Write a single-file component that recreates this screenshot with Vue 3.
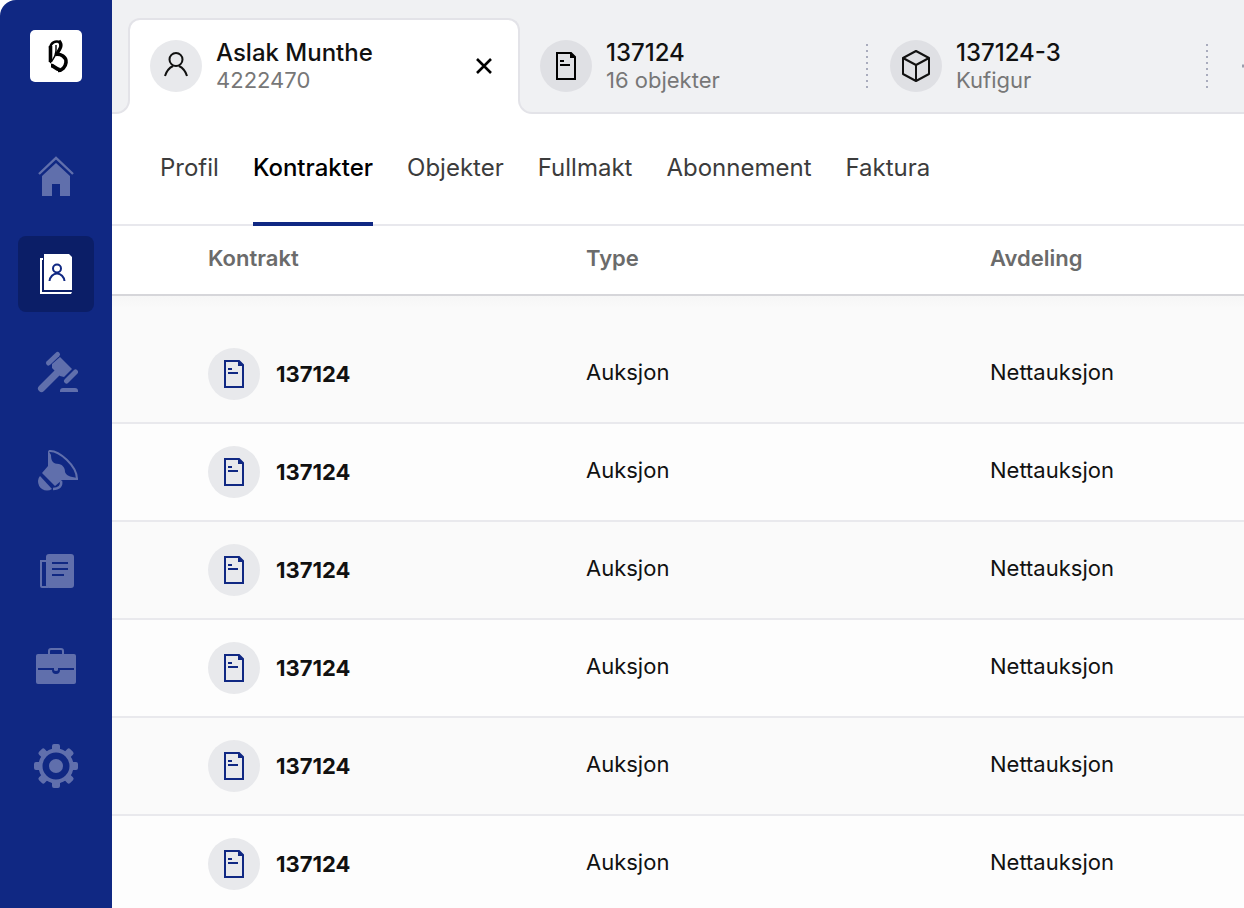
<script setup>
import { ref } from 'vue'

const navItems = [
  { id: 'home', label: 'Hjem' },
  { id: 'contacts', label: 'Kunder' },
  { id: 'auction', label: 'Auksjoner' },
  { id: 'marketing', label: 'Markedsføring' },
  { id: 'news', label: 'Nyheter' },
  { id: 'business', label: 'Forretning' },
  { id: 'settings', label: 'Innstillinger' },
]
const activeNav = ref('contacts')

const sections = ['Profil', 'Kontrakter', 'Objekter', 'Fullmakt', 'Abonnement', 'Faktura']
const activeSection = ref('Kontrakter')

const contracts = Array.from({ length: 6 }, (_, i) => ({
  id: i,
  number: '137124',
  type: 'Auksjon',
  department: 'Nettauksjon',
}))
</script>

<template>
  <div class="app">
    <aside class="sidebar">
      <a class="logo" href="#" aria-label="Forside">
        <svg width="52" height="52" viewBox="0 0 52 52" fill="none" stroke="#000">
          <path d="M20.5 16V32" stroke-width="3.6" />
          <path d="M20 18C21 12.5 25 10.500 30 12" stroke-width="2.400" />
          <path d="M29 11C32.500 14.500 31 18 26.500 24" stroke-width="3.400" />
          <path d="M26 15V20C26 26 24 29 20 33" stroke-width="1.400" />
          <path d="M25 24.500C31 23.500 36.500 27 36 32.500C35.500 37 32 40.500 28 40.500" stroke-width="3.600" />
          <path d="M21 35.500C24 35.500 26 40 30 39.500" stroke-width="3.800" />
        </svg>
      </a>
      <nav class="side-nav" aria-label="Hovedmeny">
        <button
          v-for="item in navItems"
          :key="item.id"
          type="button"
          class="side-item"
          :class="{ active: activeNav === item.id }"
          :aria-label="item.label"
          @click="activeNav = item.id"
        >
          <svg v-if="item.id === 'home'" width="44" height="44" viewBox="0 0 44 44" fill="currentColor">
            <path d="M5 20L22 4L39 20" fill="none" stroke="currentColor" stroke-width="2.400" />
            <path d="M22 9L36 22V42H26V30H18V42H8V22Z" />
          </svg>
          <svg v-else-if="item.id === 'contacts'" width="44" height="44" viewBox="0 0 44 44">
            <path d="M9 6H6V42H37L38 40H8V8H9Z" fill="currentColor" />
            <path d="M10 2H35L38 5V38H10Z" fill="currentColor" />
            <g fill="none" stroke="#102883" stroke-width="2">
              <circle cx="23" cy="16.500" r="4" />
              <path d="M15.500 29C16 25 19 21.500 23 21.500C27 21.500 30 25 30.500 29" />
            </g>
          </svg>
          <svg v-else-if="item.id === 'auction'" width="44" height="44" viewBox="0 0 44 44" stroke="currentColor" stroke-linecap="round" fill="none">
            <path d="M7.500 38.500L24 22" stroke-width="7" />
            <path d="M14.500 13L23.500 4.500" stroke-width="5" />
            <path d="M32.500 31L41.500 22" stroke-width="5" />
            <path d="M18 14L26 7L38 19L30 27L26 26L18 18Z" fill="currentColor" stroke="none" />
            <path d="M26 42V41Q26 38 29 38H41Q44 38 44 41V42Z" fill="currentColor" stroke="none" />
          </svg>
          <svg v-else-if="item.id === 'marketing'" width="44" height="44" viewBox="0 0 44 44" fill="none" stroke="currentColor">
            <path d="M15 3C25 2 43 18 43 31" stroke-width="2" />
            <path d="M14 2L17 7C17 13 19 16 25 16C29 17 31 20 31 24C32 27 35 29 44 30V32H28L21 38L8 25L14 18Z" fill="currentColor" stroke="none" />
            <path d="M6 28L18 41Q13 44 8 41Q4 38 4 33Q4 30 6 28Z" fill="currentColor" stroke="none" />
            <path d="M27 33C28 38 25 41 19 41" stroke-width="2.500" />
          </svg>
          <svg v-else-if="item.id === 'news'" width="44" height="44" viewBox="0 0 44 44" fill="currentColor">
            <path d="M12 14H6V40Q6 42 8 42H14V40H8V16H12Z" />
            <rect x="12" y="8" width="28" height="34" rx="3" />
            <path d="M18 17H34M18 23H34M18 29H30" fill="none" stroke="#102883" stroke-width="2" />
          </svg>
          <svg v-else-if="item.id === 'business'" width="44" height="44" viewBox="0 0 44 44" fill="currentColor">
            <path d="M15 10V7Q15 5 17 5H27Q29 5 29 7V10" fill="none" stroke="currentColor" stroke-width="2" />
            <path d="M4 10H40Q42 10 42 12V38Q42 40 40 40H4Q2 40 2 38V12Q2 10 4 10Z" />
            <path d="M4 24H40V26H26Q26 30 22 30Q18 30 18 26H4Z" fill="#102883" />
            <path d="M20 24H24V26Q24 27 22 27Q20 27 20 26Z" />
          </svg>
          <svg v-else width="48" height="48" viewBox="0 0 48 48" fill="none" stroke="currentColor">
            <circle cx="24" cy="26" r="15.500" stroke-width="4" />
            <circle cx="24" cy="26" r="7" fill="currentColor" stroke="none" />
            <g fill="currentColor" stroke="none">
              <path v-for="n in 8" :key="n" d="M18 11L20 9V6Q20 4 22 4H26Q28 4 28 6V9L30 11Z" :transform="`rotate(${n * 45} 24 26)`" />
            </g>
          </svg>
        </button>
      </nav>
    </aside>

    <main class="main">
      <header class="tabs">
        <div class="tab tab-open">
          <span class="badge">
            <svg width="28" height="28" viewBox="0 0 28 28" fill="none" stroke="#111" stroke-width="2">
              <circle cx="14" cy="7.500" r="6.500" />
              <path d="M3 24C4.500 19 7 16 11 14M25 24C23.500 19 21 16 17 14" />
            </svg>
          </span>
          <span class="tab-text">
            <span class="tab-title">Aslak Munthe</span>
            <span class="tab-sub">4222470</span>
          </span>
          <button type="button" class="close" aria-label="Lukk fane">
            <svg width="16" height="16" viewBox="0 0 16 16" stroke="#000" stroke-width="2.600">
              <path d="M1 1L15 15M15 1L1 15" />
            </svg>
          </button>
        </div>
        <div class="tab tab-document">
          <span class="badge badge-dark">
            <svg width="20" height="28" viewBox="0 0 20 28" fill="none" stroke="#000" stroke-width="2">
              <path d="M1 1H15L19 5V27H1Z" />
              <path d="M14 1V6H19V5L15 1Z" fill="#000" stroke="none" />
              <path d="M4 9H8M4 13H14" />
            </svg>
          </span>
          <span class="tab-text">
            <span class="tab-title">137124</span>
            <span class="tab-sub">16 objekter</span>
          </span>
        </div>
        <div class="tab tab-object">
          <span class="badge badge-dark">
            <svg width="28" height="32" viewBox="0 0 28 32" fill="none" stroke="#111" stroke-width="2" stroke-linejoin="round">
              <path d="M14 1L27 8V24L14 31L1 24V8Z" />
              <path d="M1 8L14 15L27 8M14 15V31" />
            </svg>
          </span>
          <span class="tab-text">
            <span class="tab-title">137124-3</span>
            <span class="tab-sub">Kufigur</span>
          </span>
        </div>
        <button type="button" class="add" aria-label="Ny fane">
          <svg width="20" height="20" viewBox="0 0 20 20" stroke="#9a9dad" stroke-width="3">
            <path d="M0 10H20M10 0V20" />
          </svg>
        </button>
      </header>

      <nav class="sections" aria-label="Kundeseksjoner">
        <a
          v-for="section in sections"
          :key="section"
          href="#"
          :class="{ current: section === activeSection }"
          @click.prevent="activeSection = section"
        >{{ section }}</a>
      </nav>

      <table class="contracts">
        <thead>
          <tr>
            <th class="col-contract" scope="col">Kontrakt</th>
            <th class="col-type" scope="col">Type</th>
            <th scope="col">Avdeling</th>
          </tr>
        </thead>
        <tbody>
          <tr class="spacer" aria-hidden="true"><td colspan="3"></td></tr>
          <tr v-for="row in contracts" :key="row.id" class="row">
            <td class="col-contract">
              <div class="contract">
                <span class="badge">
                  <svg width="20" height="28" viewBox="0 0 20 28" fill="none" stroke="#102883" stroke-width="2">
                    <path d="M1 1H15L19 5V27H1Z" />
                    <path d="M14 1V6H19V5L15 1Z" fill="#102883" stroke="none" />
                    <path d="M4 9H8M4 13H14" />
                  </svg>
                </span>
                <strong>{{ row.number }}</strong>
              </div>
            </td>
            <td>{{ row.type }}</td>
            <td>{{ row.department }}</td>
          </tr>
        </tbody>
      </table>
    </main>
  </div>
</template>

<style>
body {
  margin: 0;
  background: #fff;
}
</style>

<style scoped>
.app {
  display: flex;
  height: 100vh;
  overflow: hidden;
  font-family: Inter, 'Liberation Sans', sans-serif;
  color: #111;
}
button {
  padding: 0;
  border: 0;
  background: none;
  font: inherit;
  cursor: pointer;
}
a {
  color: inherit;
  text-decoration: none;
}
svg {
  display: block;
}
.sidebar {
  flex: none;
  box-sizing: border-box;
  width: 112px;
  padding-top: 30px;
  display: flex;
  flex-direction: column;
  align-items: center;
  gap: 56px;
  background: #102883;
  border-top-left-radius: 16px;
}
.logo {
  border-radius: 5px;
  background: #fff;
}
.side-nav {
  display: flex;
  flex-direction: column;
  gap: 22px;
}
.side-item {
  width: 76px;
  height: 76px;
  display: flex;
  align-items: center;
  justify-content: center;
  border-radius: 8px;
  color: #606fac;
}
.side-item.active {
  background: #0b1e67;
  color: #fff;
}
.main {
  flex: 1;
  min-width: 0;
  overflow: hidden;
}
.tabs {
  box-sizing: border-box;
  display: flex;
  align-items: flex-end;
  height: 114px;
  padding-left: 16px;
  background: #f0f1f3;
  box-shadow: inset 0 -2px #e3e3e8;
}
.tab {
  flex: none;
  box-sizing: border-box;
  display: flex;
  align-items: center;
  gap: 14px;
  height: 96px;
  padding-left: 20px;
}
.tab-open {
  position: relative;
  width: 392px;
  padding-right: 26px;
  padding-bottom: 2px;
  border: 2px solid #e3e3e8;
  border-bottom: 0;
  border-radius: 12px 12px 0 0;
  background: #fff;
}
.tab-open::before,
.tab-open::after {
  content: '';
  position: absolute;
  bottom: 0;
  box-sizing: border-box;
  width: 18px;
  height: 16px;
  border-bottom: 2px solid #e3e3e8;
  background: #f0f1f3;
  clip-path: inset(0);
}
.tab-open::before {
  right: 100%;
  border-right: 2px solid #e3e3e8;
  border-bottom-right-radius: 14px;
  box-shadow: 4px 4px 0 4px #fff;
}
.tab-open::after {
  left: 100%;
  border-left: 2px solid #e3e3e8;
  border-bottom-left-radius: 14px;
  box-shadow: -4px 4px 0 4px #fff;
}
.tab-document {
  width: 348px;
}
.tab-object {
  width: 340px;
  padding-left: 22px;
}
.tab-document,
.tab-object {
  background: repeating-linear-gradient(#a9acbd 0 2px, transparent 2px 6px) right 26px / 2px 44px no-repeat;
}
.badge {
  flex: none;
  width: 52px;
  height: 52px;
  display: flex;
  align-items: center;
  justify-content: center;
  border-radius: 50%;
  background: #e8e9ec;
}
.badge-dark {
  background: #dfe0e4;
}
.tab-text {
  flex: 1;
  display: flex;
  flex-direction: column;
}
.tab-title {
  font-size: 24px;
  font-weight: 500;
  line-height: 28px;
}
.tab-sub {
  font-size: 22px;
  line-height: 26px;
  color: #777;
}
.add {
  flex: none;
  margin-left: 34px;
  height: 96px;
}
.sections {
  box-sizing: border-box;
  display: flex;
  gap: 34px;
  height: 112px;
  padding-left: 48px;
  border-bottom: 2px solid #e8e8ed;
  font-size: 24px;
  line-height: 108px;
  color: #3c3c3c;
}
.sections a {
  box-sizing: border-box;
  height: 112px;
}
.sections .current {
  border-bottom: 4px solid #102883;
  font-weight: 500;
  color: #000;
}
.contracts {
  width: 100%;
  table-layout: fixed;
  border-collapse: separate;
  border-spacing: 0;
  font-size: 22px;
}
th,
td {
  padding: 0;
  text-align: left;
}
th {
  box-sizing: border-box;
  height: 70px;
  padding-bottom: 4px;
  border-bottom: 2px solid #d6d6da;
  font-weight: 600;
  color: #6b6b6b;
}
.col-contract {
  width: 474px;
  padding-left: 96px;
  box-sizing: border-box;
}
.col-type {
  width: 404px;
}
.spacer td {
  height: 30px;
  background: linear-gradient(#f6f6f6, #fafafa 12px);
}
.row td {
  box-sizing: border-box;
  height: 98px;
  padding-bottom: 4px;
  border-bottom: 2px solid #e9e9ed;
  background: #fafafa;
}
.row:nth-child(odd) td {
  background: #fdfdfd;
}
.row .col-contract {
  padding-bottom: 0;
}
.contract {
  display: flex;
  align-items: center;
  gap: 16px;
}
.contract strong {
  font-weight: 700;
}
</style>
